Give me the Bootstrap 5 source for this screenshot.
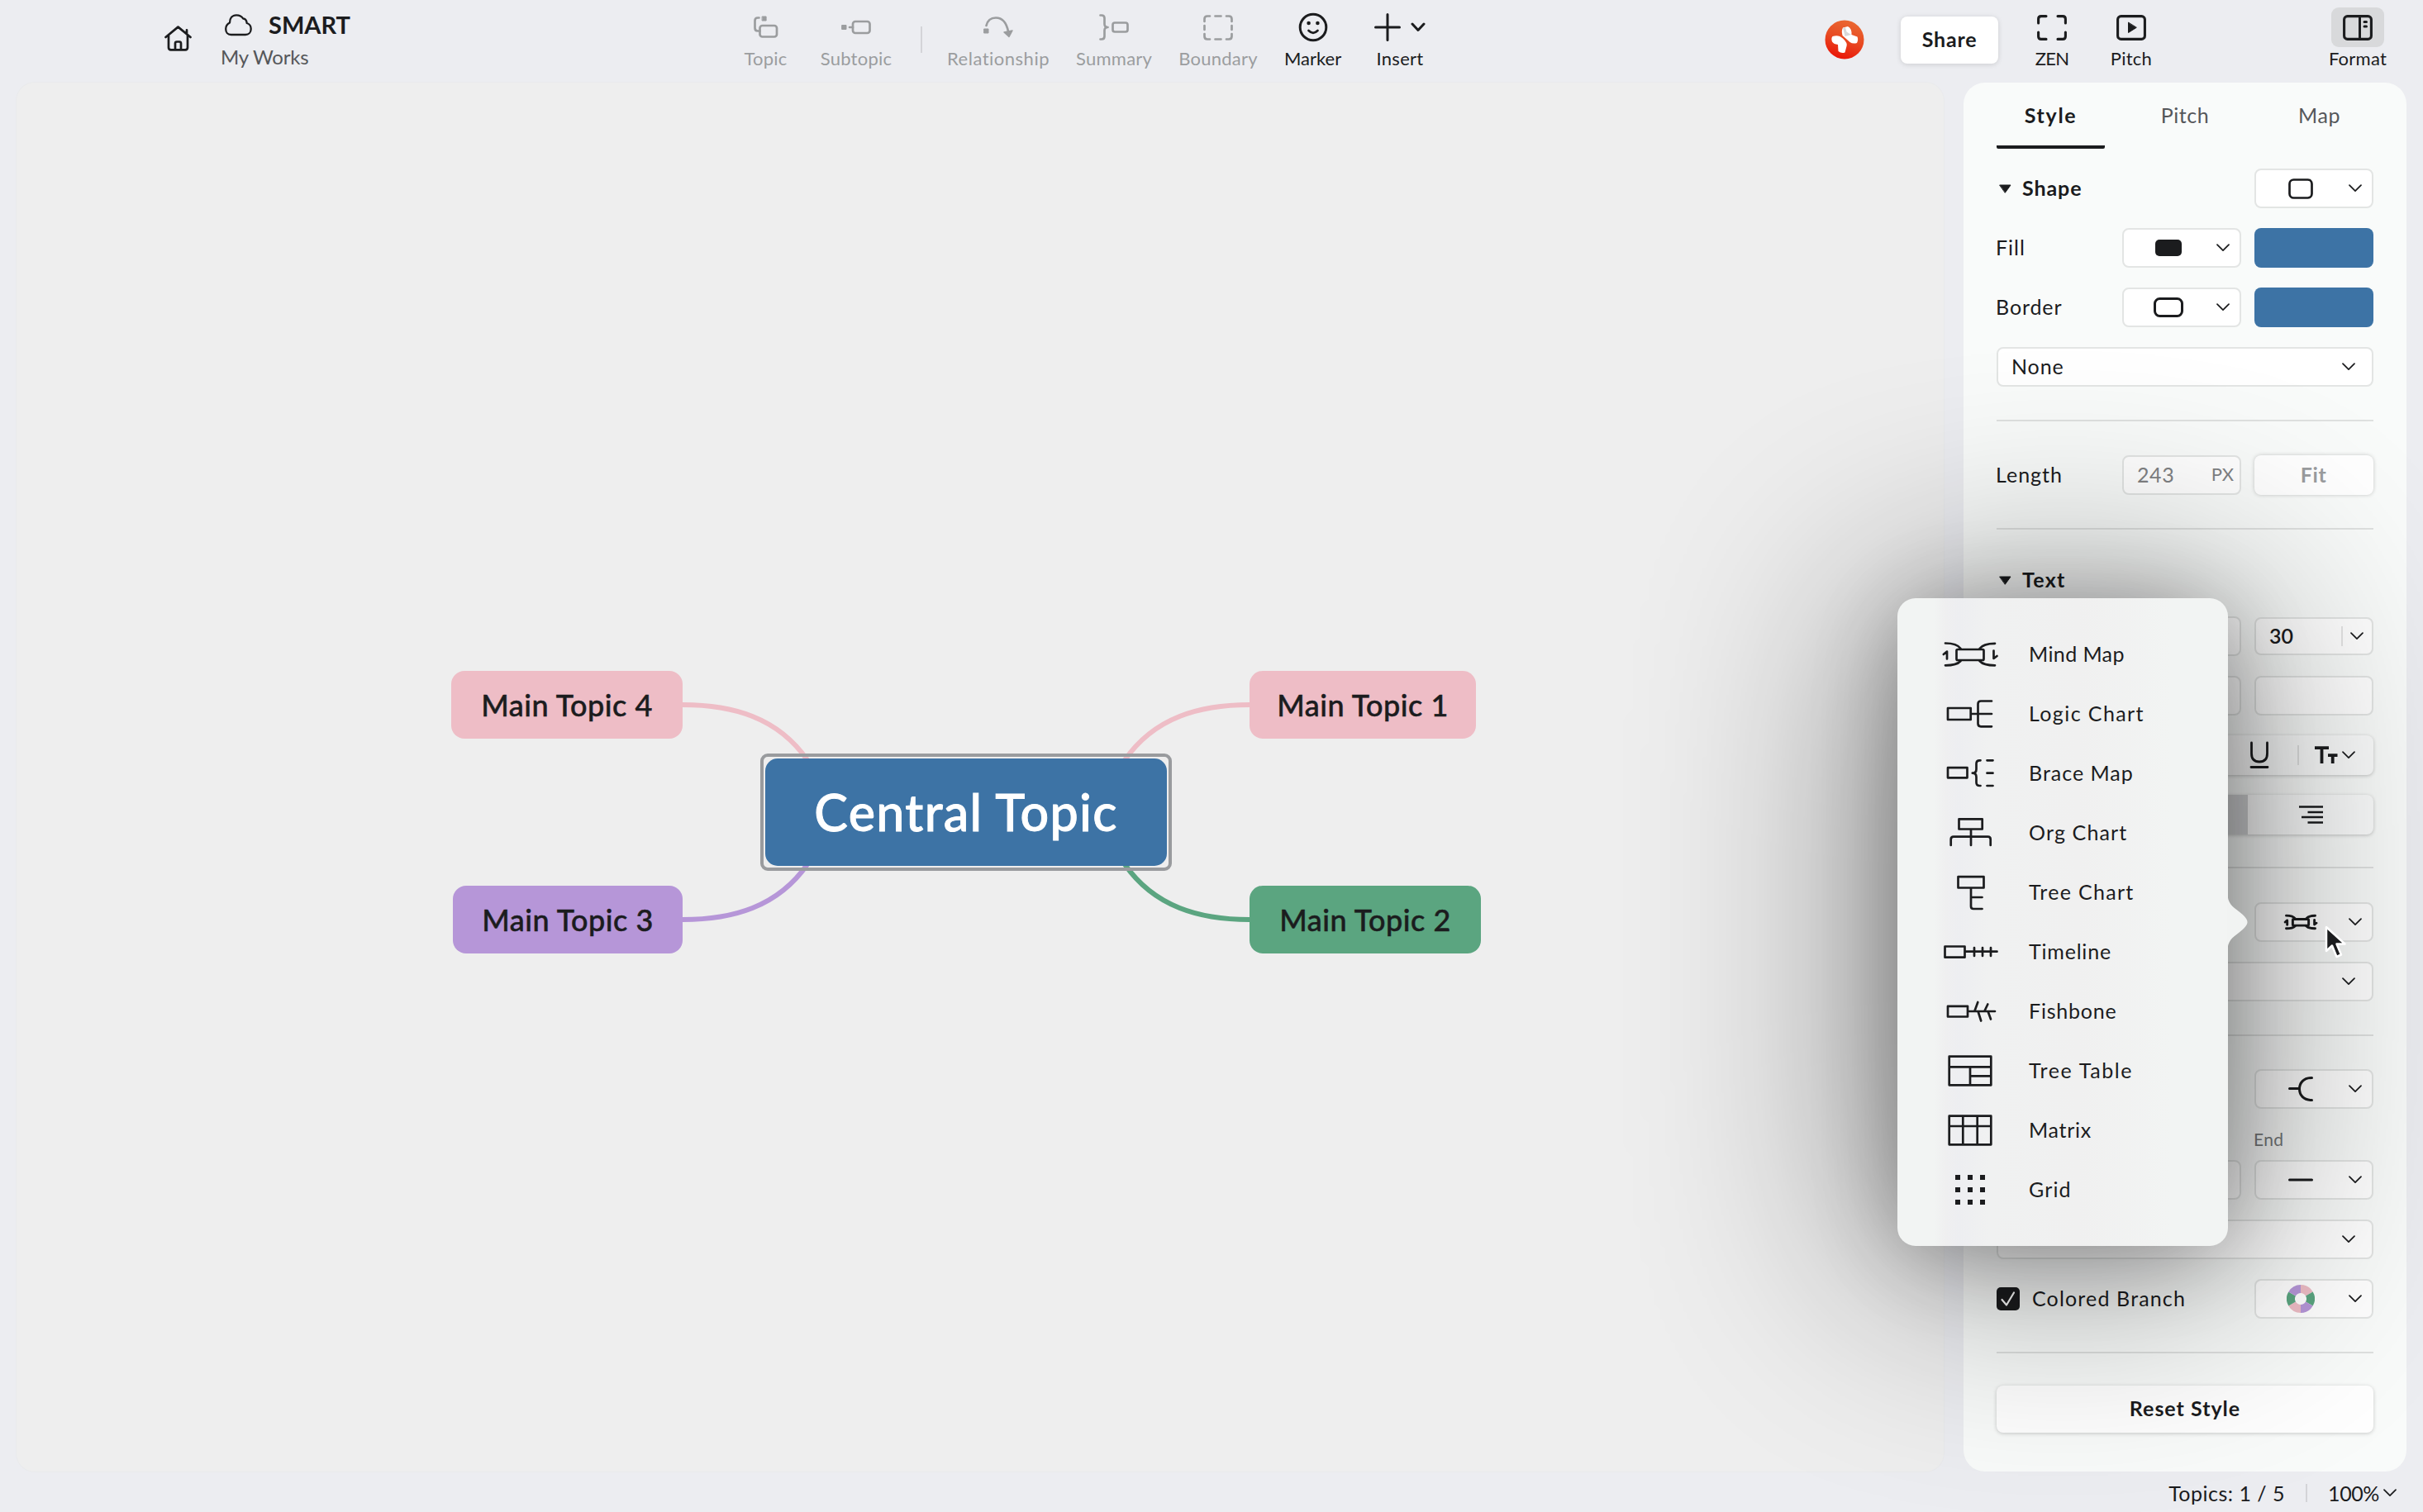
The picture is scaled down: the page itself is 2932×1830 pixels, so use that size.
<!DOCTYPE html>
<html lang="en">
<head>
<meta charset="utf-8">
<title>SMART</title>
<link rel="stylesheet" href="https://cdn.jsdelivr.net/npm/bootstrap@5.3.0/dist/css/bootstrap.min.css">
<style>
  :root { --ink: #1b1c1e; --muted: #9b9d9f; --blue: #3d73a5; }
  body { width: 2932px; height: 1830px; overflow: hidden; background: #ecedf1; color: var(--ink);
    font-family: Lato, "Noto Sans", sans-serif; font-size: 25px; line-height: 1.2; }
  svg { display: block; flex: none; fill: none; stroke: currentColor; stroke-width: 2.7; stroke-linecap: round; stroke-linejoin: round; }
  .topbar { height: 100px; flex: none; }
  .zone-file { width: 900px; padding: 11px 0 0 199px; }
  .zone-file .house { margin: 20px 35px 0 0; }
  .doc-title { height: 38px; font-size: 29px; gap: 20px; padding-left: 5px; }
  .doc-place { height: 40px; font-size: 24px; color: #55575a; letter-spacing: -.2px; }
  .zone-tools { width: 1308px; }
  .tool { font-size: 22px; padding-top: 9px; white-space: nowrap; letter-spacing: .25px; }
  .tool .pic { height: 48px; }
  .tool .cap { height: 28px; line-height: 28px; }
  .off { color: var(--muted); }
  .bar { width: 2px; background: rgba(0,0,0,.1); }
  .logo { margin: 24px 44px 0 0; }
  .share { width: 118px; height: 57px; margin-top: 20px; padding-bottom: 3px; background: #fff; border-radius: 8px; font-weight: 700;
    box-shadow: 0 1px 6px rgba(0,0,0,.14); letter-spacing: .8px; }
  .fmt .pic { width: 64px; background: #d8d9db; border-radius: 9px; }

  .stage { height: 1680.5px; padding: 0 20px; gap: 24px; flex: none; }
  .board { width: 2332px; background: #eee; border-radius: 22px; box-shadow: 0 0 0 1px #e9eaec; }
  .board > svg { left: 0; top: 0; }
  .node { height: 82px; padding-top: 1px; border-radius: 16px; font-size: 36px; font-weight: 500; letter-spacing: .5px; white-space: nowrap; -webkit-text-stroke: .5px currentColor; }
  .n4 { left: 526px; top: 712px; width: 280px; background: #eebdc6; }
  .n3 { left: 528px; top: 972px; width: 278px; background: #b696d8; }
  .n1 { left: 1492px; top: 712px; width: 274px; background: #eebdc6; }
  .n2 { left: 1492px; top: 972px; width: 280px; background: #5ba580; }
  .hub { left: 900px; top: 812px; width: 498px; height: 142px; border: 4px solid #999b9e; border-radius: 9px; padding: 2px; }
  .hub > div { background: var(--blue); color: #fff; border-radius: 15px; font-size: 61px; font-weight: 500; letter-spacing: 1.3px; -webkit-text-stroke: .9px currentColor; }

  .side { width: 536px; padding: 0 40px; background: #f9fbfa; border-radius: 26px; letter-spacing: .6px; }
  .tab-item { width: 131px; height: 80px; color: #55575a; padding-top: 24px; letter-spacing: .6px; }
  .tab-item.on { color: var(--ink); font-weight: 700; letter-spacing: 1.7px; border-bottom: 4px solid var(--ink); border-radius: 2px; }
  .ctl { height: 48px; margin-top: 24px; gap: 16px; flex: none; }
  .word { padding-bottom: 2px; margin-left: -1px; }
  .ctl .head { font-weight: 700; gap: 14px; padding-left: 3px; letter-spacing: .9px; }
  .pick, .swatch, .soft { width: 144px; height: 48px; border-radius: 8px; }
  .pick { background: #fff; border: 2px solid #e3e5e4; padding-right: 12px; }
  .pick .slot { width: 108px; }
  .pick.wide { width: 456px; padding: 0 20px 0 17px; }
  .swatch { background: var(--blue); }
  .soft { background: #fff; box-shadow: 0 0 5px rgba(0,0,0,.2); font-weight: 700; color: var(--muted); }
  .pick.low { height: 46px; padding-right: 10px; }
  .rule { height: 2px; background: #dfe1e0; margin-top: 40px; flex: none; }
  .after { margin-top: 41px; }
  .strip { width: 456px; height: 48px; border-radius: 8px; background: #fbfcfc; box-shadow: 0 1px 4px rgba(0,0,0,.22); overflow: hidden; }
  .seg-on { width: 152px; background: #cfd0d2; }
  .reset { width: 456px; height: 57px; margin-top: 39px; padding-bottom: 3px; border-radius: 8px; background: #fff; font-weight: 700; letter-spacing: 1px;
    box-shadow: 0 1px 5px rgba(0,0,0,.2); flex: none; }
  .tick { width: 28px; height: 28px; border-radius: 5px; background: var(--ink); color: #fff; }
  .end-cap { height: 62px; padding: 12px 0 0 311px; font-size: 21px; color: #77797b; flex: none; letter-spacing: .4px; }

  .glow { background: #000; border-radius: 60px; pointer-events: none; }
  .glow-wide { left: 2256px; top: 714px; width: 480px; height: 830px; opacity: .4; filter: blur(140px); }
  .glow-near { left: 2296px; top: 734px; width: 400px; height: 784px; opacity: .28; filter: blur(52px); }
  .menu-pop { left: 2296px; top: 724px; width: 400px; height: 784px; padding-top: 32px; border-radius: 22px;
    background: linear-gradient(90deg, #f2f4f3 0 45px, #efeff0 58px, #edeef1 75px, #f0f1f1 110px, #f0f0f0 220px, #f2f4f3 330px);
    letter-spacing: 1.15px; }
  .menu-pop .beak { left: 399px; top: 354px; }
  .opt { height: 72px; padding-left: 52px; gap: 36px; }
  .cursor { left: 2812px; top: 1119px; }

  .foot { height: 49px; padding: 3px 32px 0 0; gap: 25px; }
</style>
</head>
<body class="d-flex flex-column">
<svg width="0" height="0" class="position-absolute">
  <symbol id="chev" viewBox="0 0 16 10"><path d="M1 1.2 8 8.2 15 1.2" stroke-width="1.7"/></symbol>
  <symbol id="mind" viewBox="0 0 72 48">
    <rect x="19.5" y="18" width="33" height="13" rx="1.5"/>
    <path d="M6 10.5C15 10.5 21 12 24.5 17M66 10.8C57 10.8 51 12 47.5 17M24.5 32C21 36 14 37.3 6 37.3M47.5 32C51 36 58 37.3 66 37.3M8 29.5V20.5L3.8 24M64.5 19.5V29L68.5 26"/>
  </symbol>
</svg>

<header class="topbar d-flex">
  <div class="zone-file d-flex align-items-start">
    <svg class="house" width="33" height="31" viewBox="0 0 33 31"><path d="M1.5 14 16.5 1.6 31.5 14M5 11.5V26.5Q5 29.3 7.8 29.3H25.2Q28 29.3 28 26.5V11.5M27 10V5.3M13 29V21.5Q13 19.5 15 19.5H18Q20 19.5 20 21.5V29"/></svg>
    <div>
      <div class="doc-title d-flex align-items-center fw-bold">
        <svg width="33" height="27" viewBox="0 0 33 27"><path d="M7.5 25H25c4 0 6.7-3 6.7-7 0-3.5-1.7-6-5-7-.5-4-2.5-5.5-4.5-5.5C20.5 2.5 17.5 1.3 14 1.3 9 1.3 6 5 6 10.5 3 12 1.2 14.5 1.2 18 1.2 22 3.5 25 7.5 25Z" stroke-width="2.3"/></svg>
        <span>SMART</span>
      </div>
      <div class="doc-place d-flex align-items-center">My Works</div>
    </div>
  </div>
  <div class="zone-tools d-flex">
    <div class="tool off text-center" style="width:53px"><div class="pic d-flex align-items-center justify-content-center">
      <svg width="30" height="28" viewBox="0 0 30 28"><path d="M6.5 2.5H5Q1.5 2.5 1.5 6V15Q1.5 18.5 5 18.5H7.5"/><rect x="7.5" y="12" width="20.5" height="13.5" rx="3"/><rect x="10.5" y="1" width="4.6" height="5" fill="currentColor" stroke-width="1"/></svg></div><div class="cap">Topic</div></div>
    <div class="tool off text-center" style="width:90px;margin-left:38px"><div class="pic d-flex align-items-center justify-content-center">
      <svg width="36" height="18" viewBox="0 0 36 18"><rect x="1" y="6.5" width="5" height="5" fill="currentColor" stroke-width="1"/><path d="M10 9H14"/><rect x="14" y="2" width="20.5" height="14" rx="3"/></svg></div><div class="cap">Subtopic</div></div>
    <div class="bar" style="height:32px;margin:32px 31px 0 33px"></div>
    <div class="tool off d-flex flex-column align-items-center" style="width:122px;letter-spacing:.5px"><div class="pic d-flex align-items-center justify-content-center">
      <svg width="36" height="26" viewBox="0 0 36 26"><path d="M3.5 11C5 4.5 9.5 1.5 15 1.5 23 1.5 28 8 30 18"/><path d="M25 19 35 17 31 24.5Z" fill="currentColor" stroke-width="1.5"/><rect x="1" y="15" width="5" height="5" fill="currentColor" stroke-width="1"/></svg></div><div class="cap">Relationship</div></div>
    <div class="tool off text-center" style="width:92px;margin-left:33px"><div class="pic d-flex align-items-center justify-content-center">
      <svg width="36" height="32" viewBox="0 0 36 32"><path d="M1.5 1.5H3Q6.5 1.5 6.5 5V12Q6.5 16 10.5 16 6.5 16 6.5 20V27Q6.5 30.5 3 30.5H1.5"/><rect x="16.5" y="10.5" width="18" height="11" rx="2.5"/></svg></div><div class="cap">Summary</div></div>
    <div class="tool off text-center" style="width:96px;margin-left:32px"><div class="pic d-flex align-items-center justify-content-center">
      <svg width="36" height="31" viewBox="0 0 36 31"><path d="M1.5 8V5Q1.5 1.5 5 1.5H8M28 1.5H31Q34.5 1.5 34.5 5V8M34.5 23V26Q34.5 29.5 31 29.5H28M8 29.5H5Q1.5 29.5 1.5 26V23M14.5 1.5H21.5M14.5 29.5H21.5M1.5 13V18M34.5 13V18"/></svg></div><div class="cap">Boundary</div></div>
    <div class="tool text-center" style="width:69px;margin-left:32px;letter-spacing:0"><div class="pic d-flex align-items-center justify-content-center">
      <svg width="36" height="36" viewBox="0 0 36 36"><circle cx="18" cy="18" r="15.8" stroke-width="3"/><path d="M12.5 22Q18 27.5 23.5 22"/><g fill="currentColor" stroke="none"><circle cx="12.6" cy="13" r="2.3"/><circle cx="23.4" cy="13" r="2.3"/></g></svg></div><div class="cap">Marker</div></div>
    <div class="tool text-center" style="width:62px;margin-left:40px"><div class="pic d-flex align-items-center justify-content-between">
      <svg width="32" height="34" viewBox="0 0 32 34"><path d="M16 1.5V32.5M1.5 17H30.5" stroke-width="3"/></svg>
      <svg width="18" height="12" viewBox="0 0 18 12"><path d="M2 2 9 9.5 16 2" stroke-width="3"/></svg></div><div class="cap">Insert</div></div>
  </div>
  <div class="d-flex">
    <svg class="logo" width="48" height="48" viewBox="0 0 48 48"><defs><linearGradient id="lg" x1=".7" y1="0" x2=".4" y2="1"><stop offset="0" stop-color="#ea6a33"/><stop offset=".5" stop-color="#e84a22"/><stop offset="1" stop-color="#ea1508"/></linearGradient></defs>
      <circle cx="24" cy="24" r="23.5" fill="url(#lg)" stroke="none"/>
      <path d="M22 9.5 28 8Q33 10.5 32.5 18L39.5 20.5Q41 24 39 28 34 29.5 30.5 27L21.5 19Q20 13 22 9.5Z" fill="#fff" stroke="none"/>
      <path d="M9 26.5Q7.5 22 9.5 20 17 17.5 22 22.5 28 28 26.5 32L24.5 39.5Q20 41 16.5 38L16 30Q11 29.5 9 26.5Z" fill="#fff" stroke="none"/>
      <path d="M22.2 10 25 9 26.5 14.5 32 18 24.5 20Z" fill="#d8d8d8" stroke="none"/></svg>
    <div class="share d-flex align-items-center justify-content-center">Share</div>
    <div class="tool text-center" style="width:42px;margin-left:44px;letter-spacing:-.8px"><div class="pic d-flex align-items-center justify-content-center">
      <svg width="36" height="31" viewBox="0 0 36 31"><path d="M1.6 10V5Q1.6 1.6 5 1.6H11M25 1.6H31Q34.4 1.6 34.4 5V10M34.4 21V26Q34.4 29.4 31 29.4H25M11 29.4H5Q1.6 29.4 1.6 26V21" stroke-width="3.1"/></svg></div><div class="cap">ZEN</div></div>
    <div class="tool text-center" style="width:52px;margin-left:49px"><div class="pic d-flex align-items-center justify-content-center">
      <svg width="36" height="31" viewBox="0 0 36 31"><rect x="1.6" y="1.6" width="32.8" height="27.8" rx="4" stroke-width="3.1"/><path d="M14.5 9.5V21.5L24 15.5Z" fill="currentColor" stroke-width="1"/></svg></div><div class="cap">Pitch</div></div>
    <div class="tool fmt d-flex flex-column align-items-center" style="width:72px;margin-left:212px"><div class="pic d-flex align-items-center justify-content-center">
      <svg width="36" height="31" viewBox="0 0 36 31"><rect x="1.6" y="1.6" width="32.8" height="27.8" rx="4" stroke-width="3.1"/><path d="M20.5 2V29" stroke-width="3"/><path d="M26 8.5H28.5M26 14H28.5" stroke-width="3"/></svg></div><div class="cap">Format</div></div>
  </div>
</header>

<main class="stage d-flex">
  <section class="board position-relative">
    <svg class="position-absolute" width="2332" height="1680" viewBox="20 100 2332 1680" style="stroke-width:6;stroke-linecap:butt">
      <path d="M826 853C886 853 941 868 977 920" stroke="#eebdc6"/>
      <path d="M1512 853C1452 853 1397 868 1361 920" stroke="#eebdc6"/>
      <path d="M826 1113C886 1113 941 1098 977 1046" stroke="#b696d8"/>
      <path d="M1512 1113C1452 1113 1397 1098 1361 1046" stroke="#5ba580"/>
    </svg>
    <div class="node n4 position-absolute d-flex align-items-center justify-content-center">Main Topic 4</div>
    <div class="node n3 position-absolute d-flex align-items-center justify-content-center">Main Topic 3</div>
    <div class="node n1 position-absolute d-flex align-items-center justify-content-center">Main Topic 1</div>
    <div class="node n2 position-absolute d-flex align-items-center justify-content-center">Main Topic 2</div>
    <div class="hub position-absolute"><div class="h-100 d-flex align-items-center justify-content-center">Central Topic</div></div>
  </section>

  <aside class="side d-flex flex-column">
    <div class="d-flex justify-content-between">
      <div class="tab-item on text-center">Style</div><div class="tab-item text-center">Pitch</div><div class="tab-item text-center">Map</div>
    </div>
    <div class="ctl d-flex align-items-center">
      <div class="head d-flex align-items-center me-auto"><svg width="15" height="11" viewBox="0 0 15 11"><path d="M1 1H14L7.5 10Z" fill="currentColor" stroke-width="1"/></svg><span class="word">Shape</span></div>
      <div class="pick d-flex align-items-center"><span class="slot d-flex justify-content-center"><svg width="30" height="25"><rect x="1.5" y="1.5" width="27" height="22" rx="5"/></svg></span><svg class="ms-auto" width="16" height="10"><use href="#chev"/></svg></div>
    </div>
    <div class="ctl d-flex align-items-center"><span class="word me-auto" style="letter-spacing:1px">Fill</span>
      <div class="pick d-flex align-items-center"><span class="slot d-flex justify-content-center"><svg width="32" height="20"><rect width="32" height="20" rx="5" fill="#1b1c1e" stroke="none"/></svg></span><svg class="ms-auto" width="16" height="10"><use href="#chev"/></svg></div>
      <div class="swatch"></div></div>
    <div class="ctl d-flex align-items-center"><span class="word me-auto" style="letter-spacing:.9px">Border</span>
      <div class="pick d-flex align-items-center"><span class="slot d-flex justify-content-center"><svg width="36" height="24"><rect x="1.5" y="1.5" width="33" height="21" rx="6" stroke-width="3"/></svg></span><svg class="ms-auto" width="16" height="10"><use href="#chev"/></svg></div>
      <div class="swatch"></div></div>
    <div class="ctl d-flex"><div class="pick wide d-flex align-items-center"><span class="word" style="letter-spacing:.9px">None</span><svg class="ms-auto" width="16" height="10"><use href="#chev"/></svg></div></div>
    <div class="rule"></div>
    <div class="ctl after d-flex align-items-center"><span class="word me-auto" style="letter-spacing:1px">Length</span>
      <div class="pick d-flex align-items-center" style="padding:0 7px 0 17px;color:#808284"><span class="word">243</span><span class="word ms-auto" style="font-size:22px;letter-spacing:0">PX</span></div>
      <div class="soft d-flex align-items-center justify-content-center"><span class="word">Fit</span></div></div>
    <div class="rule"></div>
    <div class="ctl d-flex align-items-center" style="margin-top:37px"><div class="head d-flex align-items-center"><svg width="15" height="11" viewBox="0 0 15 11"><path d="M1 1H14L7.5 10Z" fill="currentColor" stroke-width="1"/></svg><span class="word" style="letter-spacing:1.3px">Text</span></div></div>
    <div class="ctl d-flex align-items-center" style="margin-top:20px">
      <div class="pick" style="width:296px"></div>
      <div class="pick low d-flex align-items-center" style="padding-left:17px"><span class="word fw-semibold" style="letter-spacing:0">30</span><i class="bar ms-auto" style="height:24px;margin-right:9px"></i><svg width="16" height="10"><use href="#chev"/></svg></div></div>
    <div class="ctl d-flex"><div class="pick" style="width:296px"></div><div class="pick"></div></div>
    <div class="ctl d-flex"><div class="strip d-flex align-items-center justify-content-end" style="padding-right:22px">
      <svg width="24" height="34" viewBox="0 0 24 34"><path d="M2.5 2V15Q2.5 25 12 25T21.5 15V2M2 31.5H22" stroke-width="2.8"/></svg>
      <i class="bar" style="height:24px;margin:0 19px 0 34px"></i>
      <svg width="28" height="22" viewBox="0 0 28 22" style="stroke-linecap:butt"><path d="M0 2.2H17M8.5 2V21M16 11.2H27.5M21.7 11V21" stroke-width="3.8"/></svg>
      <svg style="margin-left:5px" width="16" height="10"><use href="#chev"/></svg></div></div>
    <div class="ctl d-flex"><div class="strip d-flex"><i class="seg-on" style="background:transparent"></i><i class="seg-on"></i>
      <span class="flex-fill d-flex align-items-center justify-content-center"><svg width="30" height="22" viewBox="0 0 30 22"><path d="M1 1.5H30M11.5 8H30M4 14H30M11.5 20.5H30" stroke-width="2.7" stroke-linecap="butt"/></svg></span></div></div>
    <div class="rule" style="margin-top:39px"></div>
    <div class="ctl after d-flex justify-content-end"><div class="pick d-flex align-items-center"><span class="slot d-flex justify-content-center"><svg width="42" height="28" style="stroke-width:5"><use href="#mind"/></svg></span><svg class="ms-auto" width="16" height="10"><use href="#chev"/></svg></div></div>
    <div class="ctl d-flex"><div class="pick wide d-flex align-items-center"><svg class="ms-auto" width="16" height="10"><use href="#chev"/></svg></div></div>
    <div class="rule"></div>
    <div class="ctl d-flex justify-content-end" style="margin-top:40px"><div class="pick d-flex align-items-center"><span class="slot d-flex justify-content-center"><svg width="30" height="30" viewBox="0 0 30 30"><path d="M1.5 14.5H13M28.5 1.5C18 1.5 13.5 8 13.5 15S18 28.5 28.5 28.5" stroke-width="3"/></svg></span><svg class="ms-auto" width="16" height="10"><use href="#chev"/></svg></div></div>
    <div class="end-cap d-flex align-items-center">End</div>
    <div class="ctl d-flex mt-0"><div class="pick" style="width:296px"></div><div class="pick d-flex align-items-center"><span class="slot d-flex justify-content-center"><svg width="30" height="4"><path d="M1.5 2H28.5" stroke-width="3"/></svg></span><svg class="ms-auto" width="16" height="10"><use href="#chev"/></svg></div></div>
    <div class="ctl d-flex"><div class="pick wide d-flex align-items-center"><span style="padding-bottom:4px;letter-spacing:1px">Medium</span><svg class="ms-auto" width="16" height="10"><use href="#chev"/></svg></div></div>
    <div class="ctl d-flex align-items-center"><span class="tick d-flex align-items-center justify-content-center"><svg width="20" height="20" viewBox="0 0 20 20"><path d="M2.5 11 8 17.5 17 2.5" stroke-width="2.2"/></svg></span><span class="word me-auto" style="letter-spacing:1.15px">Colored Branch</span>
      <div class="pick d-flex align-items-center"><span class="slot d-flex justify-content-center">
        <svg width="34" height="34" viewBox="-17 -17 34 34" style="stroke-width:10;stroke-linecap:butt">
          <path d="M0-12A12 12 0 0 1 10.39-6" stroke="#eebdc6"/><path d="M10.39-6A12 12 0 0 1 10.39 6" stroke="#5ba580"/><path d="M10.39 6A12 12 0 0 1 0 12" stroke="#b696d8"/><path d="M0 12A12 12 0 0 1-10.39 6" stroke="#eebdc6"/><path d="M-10.39 6A12 12 0 0 1-10.39-6" stroke="#5ba580"/><path d="M-10.39-6A12 12 0 0 1 0-12" stroke="#b696d8"/></svg></span><svg class="ms-auto" width="16" height="10"><use href="#chev"/></svg></div></div>
    <div class="rule"></div>
    <div class="reset d-flex align-items-center justify-content-center">Reset Style</div>
  </aside>
</main>

<footer class="foot d-flex align-items-center justify-content-end">
  <span style="letter-spacing:.5px">Topics: 1 / 5</span><i class="bar" style="height:22px"></i>
  <span class="d-flex align-items-center"><span style="letter-spacing:-.4px">100%</span><svg style="margin-left:5px" width="16" height="10"><use href="#chev"/></svg></span>
</footer>

<div class="glow glow-wide position-absolute"></div>
<div class="glow glow-near position-absolute"></div>
<div class="menu-pop position-absolute">
  <svg class="beak position-absolute" width="26" height="76" viewBox="0 0 26 76"><path d="M0 2C1 16 6 19 14 25 28 36 28 40 14 51 6 57 1 60 0 74Z" fill="#f1f3f2" stroke="none"/></svg>
  <div class="opt d-flex align-items-center" style="letter-spacing:.4px"><svg width="72" height="48"><use href="#mind"/></svg><span class="word">Mind Map</span></div>
  <div class="opt d-flex align-items-center" style="letter-spacing:1.4px"><svg width="72" height="48"><path d="M9 17H36.7V31H9ZM37 24H62M62 8.5H49Q45.5 8.5 45.5 12V35.8Q45.5 39.3 49 39.3H62"/></svg><span class="word">Logic Chart</span></div>
  <div class="opt d-flex align-items-center" style="letter-spacing:1px"><svg width="72" height="48"><path d="M9 17.2H32.5V29.3H9ZM48.5 8.3H47.5Q43.5 8.3 43.5 12.3V19Q43.5 23.7 38.8 23.7 43.5 23.7 43.5 28.5V35Q43.5 39 47.5 39H48.5M56.5 8.3H63.5M56.5 23.7H63.5M56.5 39H63.5"/></svg><span class="word">Brace Map</span></div>
  <div class="opt d-flex align-items-center"><svg width="72" height="48"><path d="M22.5 7.3H50.7V19.5H22.5ZM37 20V39M12.7 39V32Q12.7 28.7 16 28.7H57.5Q60.7 28.7 60.7 32V39"/></svg><span class="word">Org Chart</span></div>
  <div class="opt d-flex align-items-center" style="letter-spacing:1.3px"><svg width="72" height="48"><path d="M21.5 5.2H52.5V18.5H21.5ZM37 19V41Q37 44 40 44H50.5M37 30H50.5"/></svg><span class="word">Tree Chart</span></div>
  <div class="opt d-flex align-items-center" style="letter-spacing:.8px"><svg width="72" height="48"><path d="M5.5 17.5H29.5V30.7H5.5ZM30 23.7H68.5M41 19V29M51 19V29M61 19V29"/></svg><span class="word">Timeline</span></div>
  <div class="opt d-flex align-items-center" style="letter-spacing:.8px"><svg width="72" height="48"><path d="M9 17.8H33V30.5H9ZM34 24H66M45.3 13 41.5 23.5M57.3 15.5 53.5 23.5M45.7 24.5 49.2 35.5M57.7 24.5 61 33.5"/></svg><span class="word">Fishbone</span></div>
  <div class="opt d-flex align-items-center" style="letter-spacing:1.6px"><svg width="72" height="48"><path d="M10.7 6.7H61.3V41.3H10.7ZM11 19.3H61M36 19.5V41M36 30.3H61"/></svg><span class="word">Tree Table</span></div>
  <div class="opt d-flex align-items-center" style="letter-spacing:.7px"><svg width="72" height="48"><path d="M10.7 6.7H61.3V41.3H10.7ZM11 19H61M27.3 7V41M44.7 7V41"/></svg><span class="word">Matrix</span></div>
  <div class="opt d-flex align-items-center"><svg width="72" height="48"><path d="M18 9H24M33 9H39M48 9H54M18 24H24M33 24H39M48 24H54M18 39H24M33 39H39M48 39H54" style="stroke-width:6;stroke-linecap:butt"/></svg><span class="word">Grid</span></div>
</div>
<svg class="cursor position-absolute" width="30" height="44" viewBox="0 0 30 44"><path d="M3 3V32L10 25.5 15.5 39 21 36.5 15.5 23.5H25.5Z" fill="#1b1c1e" stroke="#fff" stroke-width="2.5"/></svg>
<script src="https://cdn.jsdelivr.net/npm/bootstrap@5.3.0/dist/js/bootstrap.bundle.min.js"></script>
</body>
</html>
